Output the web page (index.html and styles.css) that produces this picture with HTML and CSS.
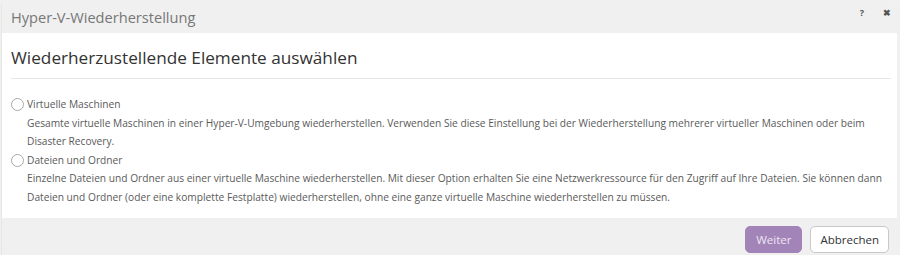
FILE: index.html
```html
<!DOCTYPE html>
<html>
<head>
  <meta charset="utf-8">
  <title>Hyper-V-Wiederherstellung</title>
  <link rel="stylesheet" href="styles.css">
</head>
<body>
  <div class="dialog">
    <div class="dialog-header">
      <span class="dialog-title">Hyper-V-Wiederherstellung</span>
      <span class="header-icons">
        <span class="icon-help">?</span>
        <span class="icon-close">&#x2716;</span>
      </span>
    </div>
    <div class="dialog-body">
      <h2>Wiederherzustellende Elemente auswählen</h2>
      <ul class="options">
        <li>
          <label class="option-label"><input type="radio" name="restore" class="radio"> Virtuelle Maschinen</label>
          <p class="option-desc">Gesamte virtuelle Maschinen in einer Hyper-V-Umgebung wiederherstellen. Verwenden Sie diese Einstellung bei der Wiederherstellung mehrerer virtueller Maschinen oder beim Disaster Recovery.</p>
        </li>
        <li>
          <label class="option-label"><input type="radio" name="restore" class="radio"> Dateien und Ordner</label>
          <p class="option-desc">Einzelne Dateien und Ordner aus einer virtuelle Maschine wiederherstellen. Mit dieser Option erhalten Sie eine Netzwerkressource für den Zugriff auf Ihre Dateien. Sie können dann Dateien und Ordner (oder eine komplette Festplatte) wiederherstellen, ohne eine ganze virtuelle Maschine wiederherstellen zu müssen.</p>
        </li>
      </ul>
    </div>
    <div class="dialog-footer">
      <button class="btn btn-primary">Weiter</button>
      <button class="btn">Abbrechen</button>
    </div>
  </div>
</body>
</html>
```

FILE: styles.css
```css
*{
  box-sizing:border-box;
}
body{
  margin:0;
  background-color:#f0f0f0;
  font-family:"Open Sans", sans-serif;
  color:#555;
}
.dialog{
  margin:0 3px 0 1px;
  height:255px;
  border-left:1px solid #e6e6e6;
  border-radius:6px 6px 0 0;
  overflow:hidden;
  display:flex;
  flex-direction:column;
  background-color:#fff;
}
.dialog-header{
  background-color:#f0f0f0;
  height:33px;
  display:flex;
  align-items:center;
  justify-content:space-between;
  padding:0 6px 0 9px;
}
.dialog-title{
  font-size:14.6px;
  color:#777;
}
.header-icons{
  display:flex;
  gap:19px;
  font-size:9px;
  font-weight:bold;
  color:#555;
  margin-top:-8px;
}
.icon-close{
  font-size:9px;
}
.dialog-body{
  padding:13px 6px 0 9px;
  flex:1;
}
h2{
  margin:0;
  font-size:17.2px;
  font-weight:normal;
  color:#333;
  padding-bottom:9px;
  border-bottom:1px solid #e6e6e6;
}
.options{
  list-style:none;
  margin:16px 0 0;
  padding:0;
  font-size:10.2px;
  line-height:18.6px;
}
.option-label{
  display:flex;
  align-items:center;
  gap:3px;
  color:#5a5a5a;
  cursor:pointer;
}
.radio{
  appearance:none;
  margin:0;
  width:13px;
  height:13px;
  border:1px solid #aaa;
  border-radius:50%;
  background-color:#fff;
}
.option-desc{
  margin:0;
  padding-left:16px;
  padding-right:6px;
  color:#5a5a5a;
}
.dialog-footer{
  background-color:#f0f0f0;
  height:37px;
  display:flex;
  justify-content:flex-end;
  align-items:center;
  gap:8px;
  padding:6px 8px 0 0;
}
.btn{
  font-family:inherit;
  font-size:11.5px;
  height:27px;
  padding:0 9px;
  border:1px solid #c8c8c8;
  border-radius:5px;
  background-color:#fff;
  color:#333;
  cursor:pointer;
}
.btn-primary{
  background-color:#a284b8;
  border-color:#a284b8;
  color:#eee6f2;
  padding:0 10px;
}
```
